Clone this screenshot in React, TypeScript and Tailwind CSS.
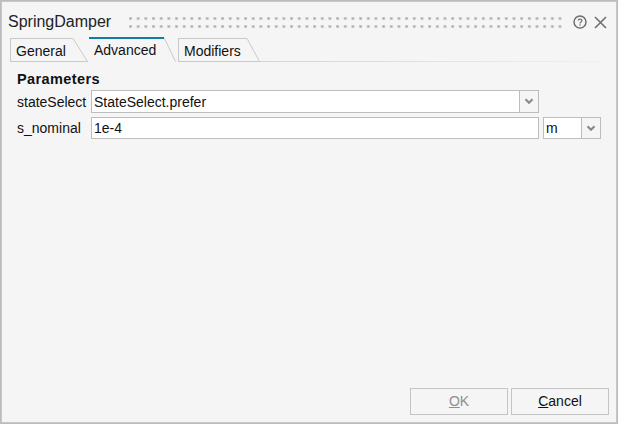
import React from "react";

const font = { fontFamily: '"Liberation Sans", Arial, sans-serif' };

function Chevron() {
  return (
    <svg width="10" height="7" viewBox="0 0 10 7" fill="none">
      <path d="M1.5 1.2 L5 4.7 L8.5 1.2" stroke="#8a8a8a" strokeWidth="2.2" />
    </svg>
  );
}

function Tab({ label, active, w, slant }: { label: string; active?: boolean; w: number; slant: number }) {
  return (
    <div className="flex items-stretch">
      <div
        className={
          active
            ? "flex h-[25px] items-center border-t-2 border-[#0f7fa8] pl-[5px] text-[14px] text-[#111]"
            : "flex h-[24px] items-center border-t border-l border-b border-[#c9c9c9] pl-[5px] pt-[3px] text-[14px] text-[#111]"
        }
        style={{ width: w }}
      >
        {label}
      </div>
      <svg width={slant} height={active ? 25 : 24} className="shrink-0">
        <path d={`M0 0.5 L${slant - 0.5} ${active ? 24.5 : 23.5}`} stroke="#c9c9c9" fill="none" />
        {!active && <path d={`M0 23.5 H${slant}`} stroke="#c9c9c9" />}
      </svg>
    </div>
  );
}

function Dots() {
  return (
    <svg className="flex-1" height="12">
      <defs>
        <pattern id="dots" width="7.67" height="8" patternUnits="userSpaceOnUse">
          <rect x="0" y="0" width="3" height="3" fill="#cfcfcf" />
          <rect x="0.7" y="0.7" width="1.6" height="1.6" fill="#a6a6a6" />
        </pattern>
      </defs>
      <rect width="100%" height="12" fill="url(#dots)" />
    </svg>
  );
}

export default function App() {
  return (
    <div
      className="flex h-[424px] w-[618px] flex-col border border-[#bbbbbb] bg-[#f5f5f5] text-[14px] text-[#111] outline outline-[#c8c8c8] -outline-offset-2"
      style={font}
    >
      <div className="flex h-[36px] shrink-0 items-center pl-[7px] pr-[10px] pt-[6px]">
        <span className="w-[121px] shrink-0 text-[16px] leading-none text-[#222]">SpringDamper</span>
        <div className="mr-[11px] flex flex-1 pt-[2px]">
          <Dots />
        </div>
        <svg width="14" height="14" viewBox="0 0 14 14" fill="none" className="mr-[7px]">
          <circle cx="7" cy="7" r="6" stroke="#6f6f6f" strokeWidth="1.5" />
          <path d="M5.2 5.6 C5.2 3.6 8.9 3.6 8.9 5.6 C8.9 7 7 6.8 7 8.4" stroke="#6f6f6f" strokeWidth="1.2" />
          <rect x="6.4" y="9.3" width="1.3" height="1.3" fill="#6f6f6f" />
        </svg>
        <svg width="13" height="13" viewBox="0 0 13 13" fill="none">
          <path d="M1 1 L12 12 M12 1 L1 12" stroke="#6f6f6f" strokeWidth="1.6" />
        </svg>
      </div>

      <div className="flex h-[25px] shrink-0 items-end pl-[9px]">
        <Tab label="General" w={63} slant={15} />
        <div className="w-[1px]" />
        <Tab label="Advanced" active w={75} slant={12} />
        <div className="w-[2px]" />
        <Tab label="Modifiers" w={69} slant={13} />
        <div className="mr-[16px] h-[1px] flex-1 bg-gradient-to-r from-[#d4d4d4] to-[#f0f0f0]" />
      </div>

      <div className="flex flex-1 flex-col pl-[16px] pr-[16px]">
        <div className="mt-[7px] h-[20px] text-[14.5px] font-bold leading-[20px] tracking-[0.4px]">Parameters</div>
        <div className="mt-[1px] flex h-[23px] items-stretch">
          <div className="w-[74px] self-center pt-[1px]">stateSelect</div>
          <div className="flex w-[429px] items-center border border-[#bdbdbd] bg-white pl-[2px] pt-[1px]">StateSelect.prefer</div>
          <div className="flex w-[19px] items-center justify-center border border-l-0 border-[#bdbdbd] bg-[#f5f5f5]">
            <Chevron />
          </div>
        </div>
        <div className="mt-[4px] flex h-[22px] items-stretch">
          <div className="w-[74px] self-center pt-[1px]">s_nominal</div>
          <div className="flex w-[448px] items-center border border-[#bdbdbd] bg-white pl-[2px] pt-[1px]">1e-4</div>
          <div className="ml-[4px] flex w-[39px] items-center border border-[#bdbdbd] bg-white pl-[2px] pt-[1px]">m</div>
          <div className="flex w-[19px] items-center justify-center border border-l-0 border-[#bdbdbd] bg-[#f5f5f5]">
            <Chevron />
          </div>
        </div>
        <div className="flex-1" />
        <div className="-mr-[8px] mb-[8px] flex justify-end gap-[3px]">
          <div className="flex h-[27px] w-[98px] items-center justify-center border border-[#c4c4c4] text-[#8f8f8f]">
            <span><u>O</u>K</span>
          </div>
          <div className="flex h-[27px] w-[98px] items-center justify-center border border-[#c4c4c4] text-[#111]">
            <span><u>C</u>ancel</span>
          </div>
        </div>
      </div>
    </div>
  );
}
